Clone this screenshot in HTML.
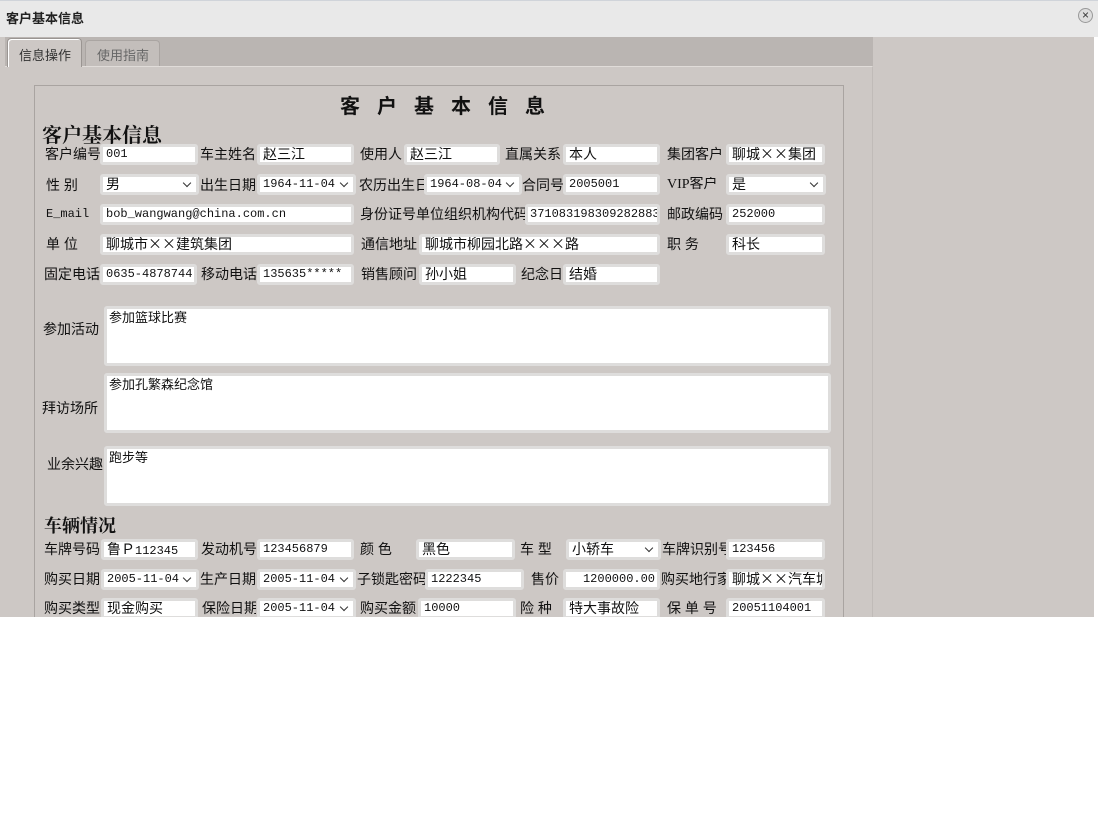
<!DOCTYPE html>
<html><head><meta charset="utf-8"><style>
*{margin:0;padding:0;box-sizing:border-box}
body{width:1098px;height:827px;background:#fff;position:relative;overflow:hidden;font-family:"Liberation Sans","WenQuanYi Zen Hei","Noto Sans CJK SC",sans-serif;font-size:13px;color:#111}
.a{position:absolute;white-space:nowrap}
.l{position:absolute;white-space:nowrap;font-size:14px;line-height:16px;overflow:hidden}
.i{position:absolute;height:21px;background:#fff;border:3px solid #dedddc;border-radius:3px;font-family:"Liberation Mono","WenQuanYi Zen Hei",monospace;font-size:12px;line-height:15px;padding-left:3px;overflow:hidden;white-space:nowrap}
.i .c,.c{font-family:"WenQuanYi Zen Hei","Noto Sans CJK SC",sans-serif;font-size:14px}
.s::after{content:"";position:absolute;right:6px;top:3px;width:5px;height:5px;border-right:1.5px solid #333;border-bottom:1.5px solid #333;transform:rotate(45deg)}
.t{position:absolute;background:#fff;border:3px solid #dedddc;border-radius:3px;font-size:13px;line-height:15px;padding:1px 2px}
</style></head><body>
<div class="a" style="left:0;top:0;width:1098px;height:37px;background:#e9e9e9;border-top:1px solid #d0d4da"></div>
<div class="a" style="left:6px;top:8px;font-size:13px;font-weight:bold;color:#222">客户基本信息</div>
<div class="a" style="left:1078px;top:8px;width:15px;height:15px;border-radius:50%;border:1px solid #999;background:#ddd;font-size:12px;line-height:12px;text-align:center;color:#333">×</div>
<div class="a" style="left:0;top:37px;width:1094px;height:580px;background:#cdc8c5"></div>
<div class="a" style="left:5px;top:37px;width:868px;height:29px;background:#bab5b2"></div>
<div class="a" style="left:5px;top:66px;width:868px;height:551px;background:#cdc8c5;border-top:1px solid #e0dcd9;border-right:1px solid #c0bbb8"></div>
<div class="a" style="left:7px;top:38px;width:75px;height:29px;background:#cdc8c5;border:1px solid #9a9592;border-bottom:none;border-radius:4px 4px 0 0;box-shadow:inset 1px 1px 0 #fff;"></div>
<div class="a" style="left:19px;top:45px;font-size:13px;color:#333">信息操作</div>
<div class="a" style="left:85px;top:40px;width:75px;height:26px;background:#c3bebb;border:1px solid #aaa5a2;border-bottom:none;border-radius:4px 4px 0 0"></div>
<div class="a" style="left:97px;top:45px;font-size:13px;color:#666">使用指南</div>
<div class="a" style="left:34px;top:85px;width:810px;height:540px;border:1px solid #a9a4a1"></div>
<div class="a" style="left:340px;top:93px;font-size:20px;font-weight:bold;letter-spacing:17px;font-family:'Noto Sans CJK SC',sans-serif;line-height:24px">客户基本信息</div>
<div class="a" style="left:42px;top:122px;font-size:20px;font-weight:bold;font-family:'Noto Serif CJK SC',serif;line-height:24px">客户基本信息</div>

<div class="l" style="left:45px;top:146px">客户编号</div><div class="i" style="left:100px;top:144px;width:98px">001</div>
<div class="l" style="left:200px;top:146px">车主姓名</div><div class="i" style="left:257px;top:144px;width:97px"><span class="c">赵三江</span></div>
<div class="l" style="left:360px;top:146px">使用人</div><div class="i" style="left:404px;top:144px;width:96px"><span class="c">赵三江</span></div>
<div class="l" style="left:505px;top:146px">直属关系</div><div class="i" style="left:563px;top:144px;width:97px"><span class="c">本人</span></div>
<div class="l" style="left:667px;top:146px">集团客户</div><div class="i" style="left:726px;top:144px;width:99px"><span class="c">聊城××集团</span></div>

<div class="l" style="left:46px;top:177px">性 别</div><div class="i s" style="left:100px;top:174px;width:99px"><span class="c">男</span></div>
<div class="l" style="left:200px;top:177px;width:56px">出生日期</div><div class="i s" style="left:257px;top:174px;width:99px">1964-11-04</div>
<div class="l" style="left:359px;top:177px;width:65px">农历出生日</div><div class="i s" style="left:424px;top:174px;width:98px">1964-08-04</div>
<div class="l" style="left:522px;top:177px">合同号</div><div class="i" style="left:563px;top:174px;width:97px">2005001</div>
<div class="l" style="left:667px;top:177px;font-family:'Liberation Serif','WenQuanYi Zen Hei',serif">VIP客户</div><div class="i s" style="left:726px;top:174px;width:100px"><span class="c">是</span></div>

<div class="l" style="left:46px;top:206px;font-size:12px;font-family:'Liberation Mono',monospace">E_mail</div><div class="i" style="left:100px;top:204px;width:254px">bob_wangwang@china.com.cn</div>
<div class="l" style="left:360px;top:206px;width:165px">身份证号单位组织机构代码</div><div class="i" style="left:525px;top:204px;width:135px;padding-left:2px">371083198309282883</div>
<div class="l" style="left:667px;top:206px">邮政编码</div><div class="i" style="left:726px;top:204px;width:99px">252000</div>

<div class="l" style="left:46px;top:236px">单 位</div><div class="i" style="left:100px;top:234px;width:254px"><span class="c">聊城市××建筑集团</span></div>
<div class="l" style="left:361px;top:236px">通信地址</div><div class="i" style="left:419px;top:234px;width:241px"><span class="c">聊城市柳园北路×××路</span></div>
<div class="l" style="left:667px;top:236px">职 务</div><div class="i" style="left:726px;top:234px;width:99px"><span class="c">科长</span></div>

<div class="l" style="left:44px;top:266px">固定电话</div><div class="i" style="left:100px;top:264px;width:97px">0635-4878744</div>
<div class="l" style="left:201px;top:266px">移动电话</div><div class="i" style="left:257px;top:264px;width:97px">135635*****</div>
<div class="l" style="left:361px;top:266px">销售顾问</div><div class="i" style="left:419px;top:264px;width:97px"><span class="c">孙小姐</span></div>
<div class="l" style="left:521px;top:266px">纪念日</div><div class="i" style="left:563px;top:264px;width:97px"><span class="c">结婚</span></div>

<div class="l" style="left:43px;top:321px">参加活动</div><div class="t" style="left:104px;top:306px;width:727px;height:60px">参加篮球比赛</div>
<div class="l" style="left:42px;top:400px">拜访场所</div><div class="t" style="left:104px;top:373px;width:727px;height:60px">参加孔繁森纪念馆</div>
<div class="l" style="left:47px;top:456px">业余兴趣</div><div class="t" style="left:104px;top:446px;width:727px;height:60px">跑步等</div>

<div class="a" style="left:44px;top:514px;font-size:18px;font-weight:bold;font-family:'Noto Serif CJK SC',serif;line-height:22px">车辆情况</div>

<div class="l" style="left:44px;top:541px">车牌号码</div><div class="i" style="left:101px;top:539px;width:97px"><span class="c">鲁Ｐ</span>112345</div>
<div class="l" style="left:201px;top:541px">发动机号</div><div class="i" style="left:257px;top:539px;width:97px">123456879</div>
<div class="l" style="left:360px;top:541px">颜 色</div><div class="i" style="left:416px;top:539px;width:99px"><span class="c">黑色</span></div>
<div class="l" style="left:520px;top:541px">车 型</div><div class="i s" style="left:566px;top:539px;width:95px"><span class="c">小轿车</span></div>
<div class="l" style="left:662px;top:541px;width:64px">车牌识别号</div><div class="i" style="left:726px;top:539px;width:99px">123456</div>

<div class="l" style="left:44px;top:571px">购买日期</div><div class="i s" style="left:101px;top:569px;width:98px">2005-11-04</div>
<div class="l" style="left:200px;top:571px;width:56px">生产日期</div><div class="i s" style="left:257px;top:569px;width:99px">2005-11-04</div>
<div class="l" style="left:357px;top:571px">子锁匙密码</div><div class="i" style="left:425px;top:569px;width:99px">1222345</div>
<div class="l" style="left:531px;top:571px">售价</div><div class="i" style="left:563px;top:569px;width:97px;text-align:right;padding-right:2px">1200000.00</div>
<div class="l" style="left:661px;top:571px;width:65px">购买地行家</div><div class="i" style="left:726px;top:569px;width:99px"><span class="c">聊城××汽车城</span></div>

<div class="l" style="left:44px;top:600px">购买类型</div><div class="i" style="left:101px;top:598px;width:97px"><span class="c">现金购买</span></div>
<div class="l" style="left:202px;top:600px;width:54px">保险日期</div><div class="i s" style="left:257px;top:598px;width:99px">2005-11-04</div>
<div class="l" style="left:360px;top:600px">购买金额</div><div class="i" style="left:418px;top:598px;width:98px">10000</div>
<div class="l" style="left:520px;top:600px">险 种</div><div class="i" style="left:563px;top:598px;width:97px"><span class="c">特大事故险</span></div>
<div class="l" style="left:667px;top:600px">保 单 号</div><div class="i" style="left:726px;top:598px;width:99px">20051104001</div>

<div class="a" style="left:0;top:617px;width:1098px;height:210px;background:#fff"></div>
</body></html>
